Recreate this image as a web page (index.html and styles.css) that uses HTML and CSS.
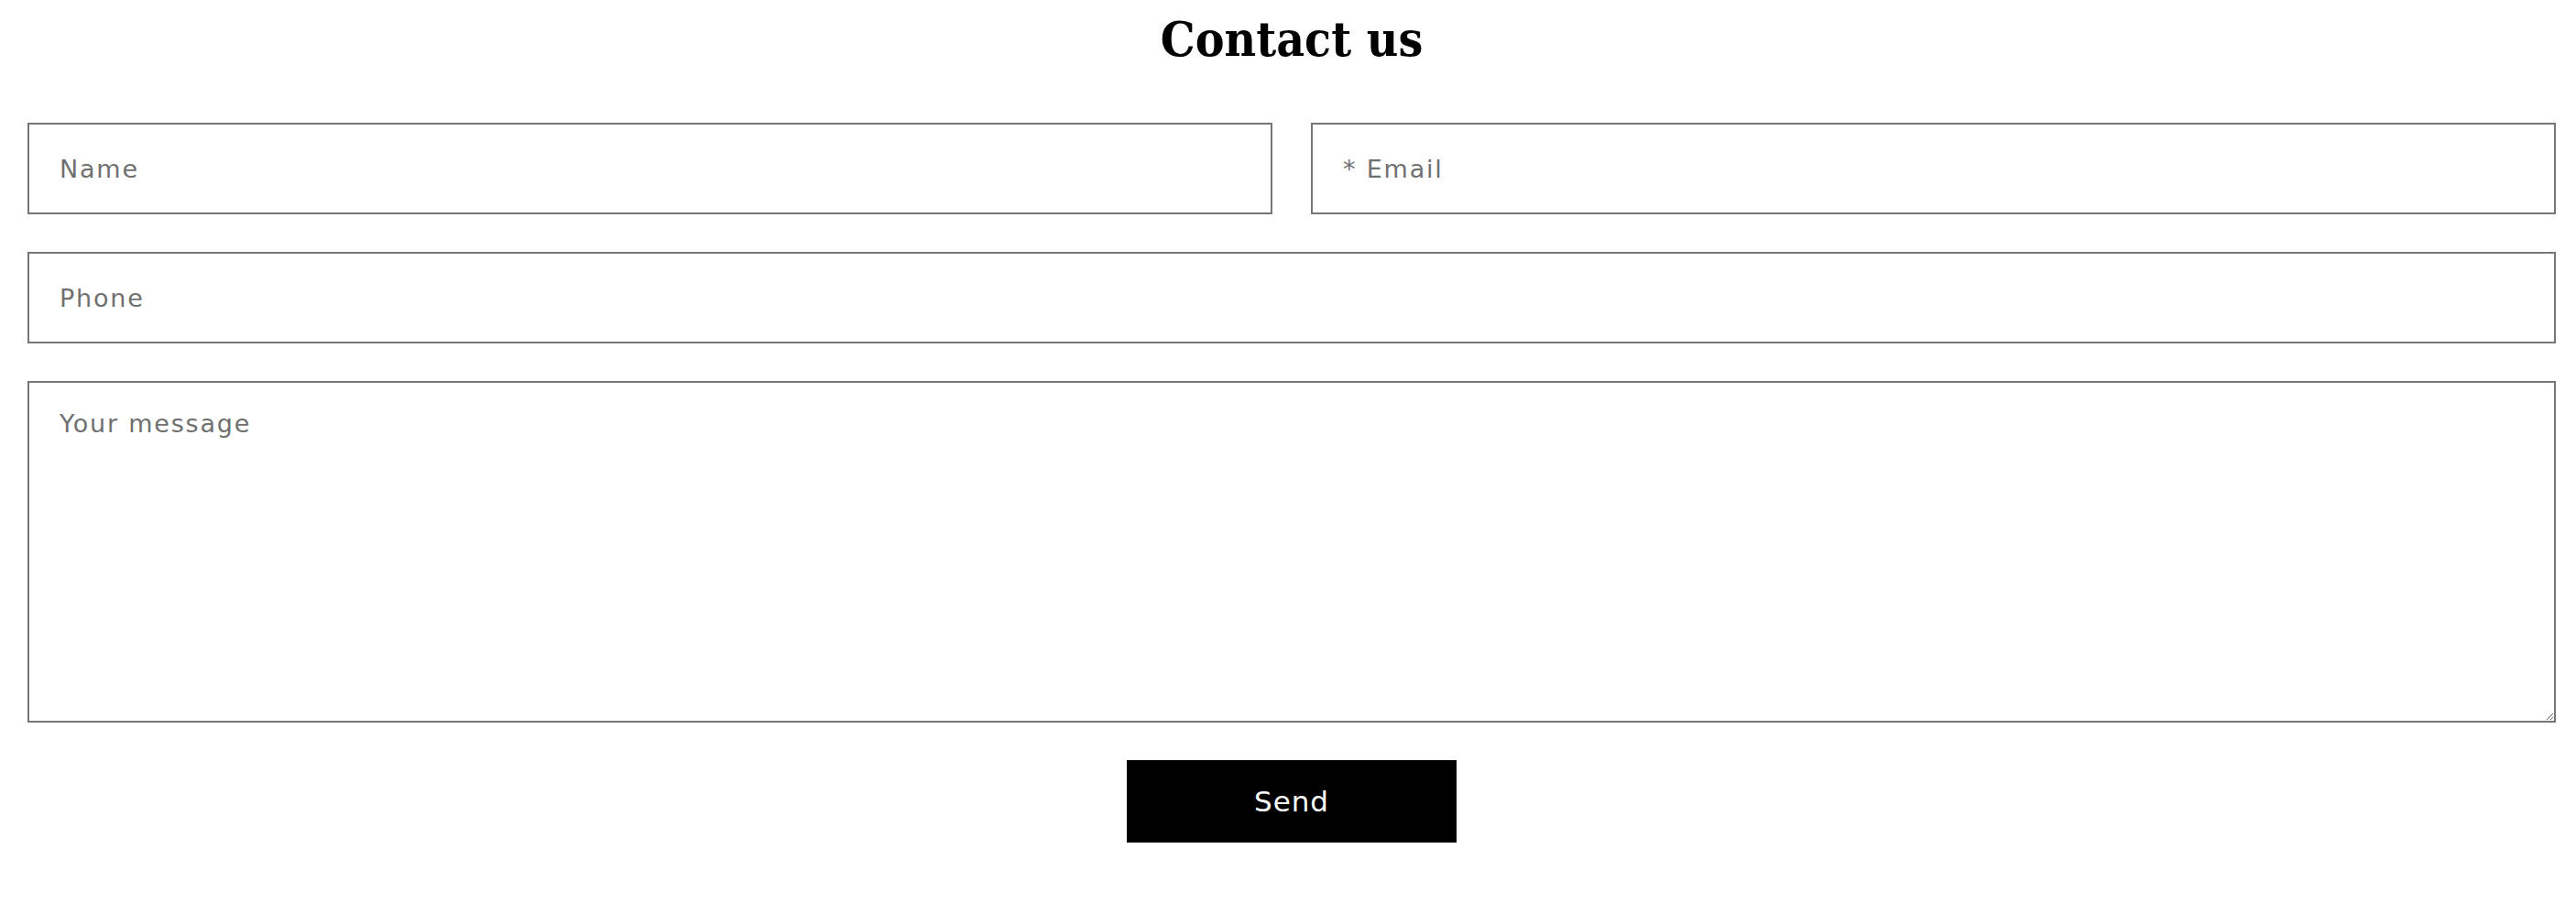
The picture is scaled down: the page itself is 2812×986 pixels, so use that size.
FILE: index.html
```html
<!DOCTYPE html>
<html lang="en">
<head>
    <meta charset="UTF-8">
    <meta name="viewport" content="width=device-width, initial-scale=1.0">
    <title>Contact us</title>
    <link rel="stylesheet" href="styles.css">
</head>
<body>
    <div class="contact">
        <h1 class="contact-title">Contact us</h1>
        <form class="contact-form" onsubmit="return false">
            <div class="field-row">
                <input class="field" type="text" placeholder="Name">
                <input class="field" type="email" placeholder="* Email">
            </div>
            <input class="field" type="tel" placeholder="Phone">
            <textarea class="field field-message" placeholder="Your message"></textarea>
            <button class="send-btn" type="submit">Send</button>
        </form>
    </div>
</body>
</html>
```

FILE: styles.css
```css
* {
    margin: 0;
    padding: 0;
    box-sizing: border-box;
}

body {
    background: #fff;
    color: #121212;
    font-family: "DejaVu Sans", sans-serif;
}

.contact {
    padding: 0 22px 0 30px;
}

.contact-title {
    font-family: "DejaVu Serif", serif;
    font-stretch: condensed;
    font-weight: bold;
    font-size: 53px;
    line-height: 84px;
    text-align: center;
    margin-bottom: 50px;
    color: #000;
}

.contact-form {
    display: flex;
    flex-direction: column;
    gap: 41px;
}

.field-row {
    display: grid;
    grid-template-columns: 1fr 1fr;
    gap: 42px;
}

.field {
    width: 100%;
    height: 100px;
    border: 2px solid #767676;
    border-radius: 0;
    padding: 0 33px;
    font-family: "DejaVu Sans", sans-serif;
    font-size: 27px;
    letter-spacing: 1.8px;
    color: #121212;
    background: #fff;
    outline: none;
}

.field::placeholder {
    color: #707070;
}

.field-message {
    height: 373px;
    padding-top: 26px;
    resize: vertical;
    line-height: 1.4;
}

.send-btn {
    align-self: center;
    width: 360px;
    height: 90px;
    border: none;
    background: #000;
    color: #fff;
    font-family: "DejaVu Sans", sans-serif;
    font-size: 31px;
    letter-spacing: 1px;
    cursor: pointer;
}
```
